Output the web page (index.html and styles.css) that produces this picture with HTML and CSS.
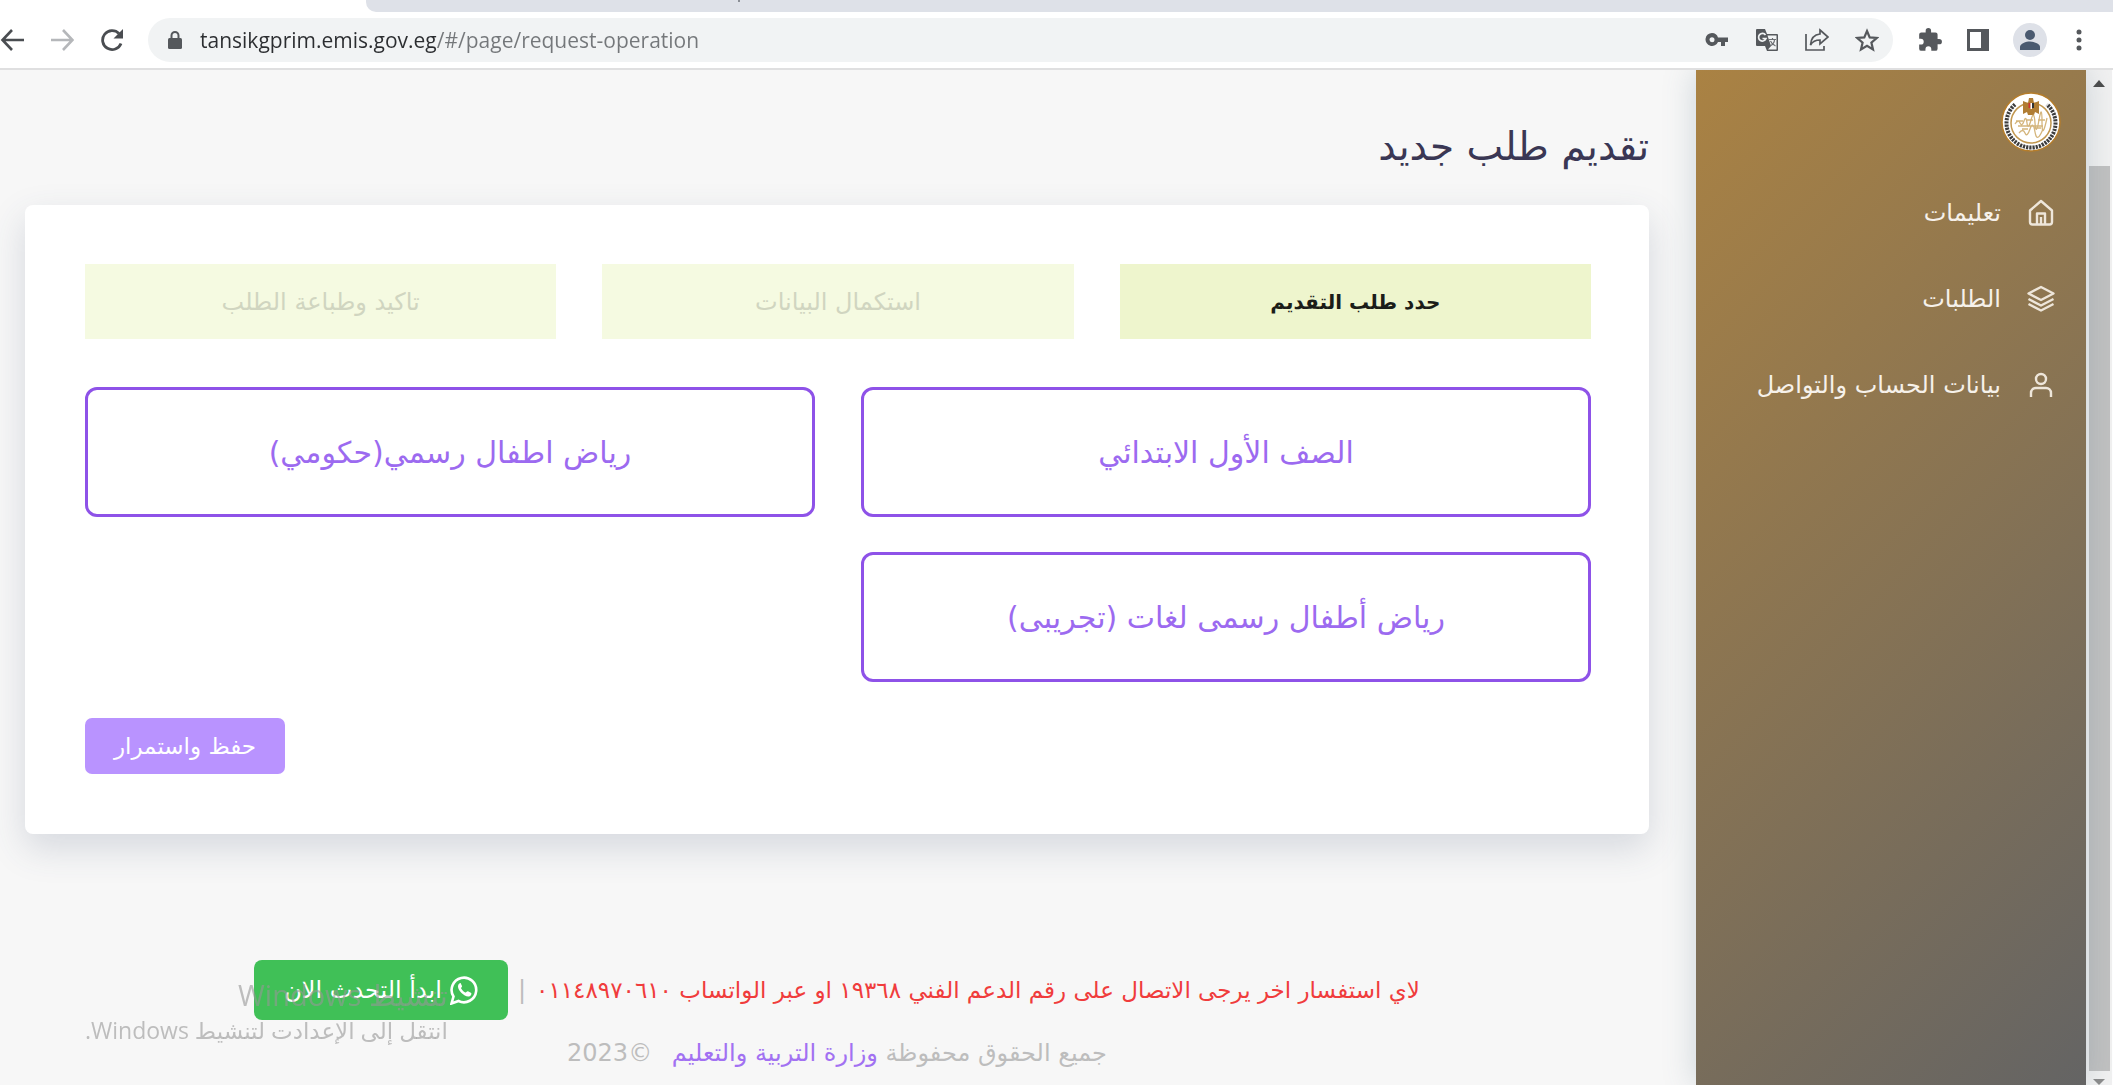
FILE: index.html
```html
<!DOCTYPE html>
<html lang="ar">
<head>
    <meta charset="UTF-8">
    <meta name="viewport" content="width=device-width, initial-scale=1.0">
    <title>تقديم طلب جديد</title>
    <link rel="stylesheet" href="styles.css">
</head>
<body>
    <!-- Browser bar -->
    <div class="tab-strip"><div class="tab-rest"><span class="tab-divider"></span></div></div>
    <header class="toolbar">
        <div class="toolbar-nav">
            <button type="button" aria-label="Back">
                <svg width="24" height="24" viewBox="0 0 24 24" fill="none" stroke="#4a4d51" stroke-width="2.6"><path d="M24 12H3M12 2 2.500 12 12 22"/></svg>
            </button>
            <button type="button" aria-label="Forward">
                <svg width="24" height="24" viewBox="0 0 24 24" fill="none" stroke="#b5b7ba" stroke-width="2.6"><path d="M1 12h21M13 2l9.500 10L13 22"/></svg>
            </button>
            <button type="button" aria-label="Reload">
                <svg width="24" height="24" viewBox="0 0 24 24" fill="none" stroke="#4a4d51" stroke-width="2.8"><path d="M21 15.500A9.500 9.500 0 1 1 19 5.500"/><path d="M23 1v9.500h-9.500z" fill="#4a4d51" stroke="none"/></svg>
            </button>
        </div>
        <div class="address">
            <svg width="14" height="20" viewBox="0 0 14 20"><path d="M3.500 9V5.500a3.500 3.500 0 0 1 7 0V9" fill="none" stroke="#55585c" stroke-width="2"/><rect x="0" y="8" width="14" height="11" rx="1.5" fill="#55585c"/></svg>
            <input type="text" class="url" dir="ltr" aria-label="Address" value="tansikgprim.emis.gov.eg/#/page/request-operation">
            <button type="button" aria-label="Passwords">
                <svg width="24" height="24" viewBox="0 0 24 24" fill="#55585c"><path fill-rule="evenodd" d="M7 5a6.500 6.500 0 1 0 6 9h3v4h4v-4h3V9.500H13A6.500 6.500 0 0 0 7 5zm0 4.200a2.500 2.500 0 1 1 0 5 2.500 2.500 0 0 1 0-5z"/></svg>
            </button>
            <button type="button" aria-label="Translate">
                <svg width="24" height="24" viewBox="0 0 24 24"><path d="M2 1h8l2 5h10a1 1 0 0 1 1 1v15a1 1 0 0 1-1 1H12l-2-5H2a1 1 0 0 1-1-1V2a1 1 0 0 1 1-1z" fill="#55585c"/><path d="M12.500 7.500H21.500v14H13l3-3.500z" fill="#f1f3f4"/><path d="M10.500 7A3.800 3.800 0 1 0 11 10.500H7.500" fill="none" stroke="#f1f3f4" stroke-width="1.7"/><path d="M14 11.500h7M17.500 10v1.500M15 18c3-1.500 4.500-4 4.500-6.500M15.500 13c1 2.500 3 4 5 5" fill="none" stroke="#6b6e72" stroke-width="1.2"/></svg>
            </button>
            <button type="button" aria-label="Share">
                <svg width="24" height="24" viewBox="0 0 24 24" fill="none" stroke="#55585c" stroke-width="1.7"><path d="M1 6v16h18v-4"/><path d="M15 2l8 7-8 7v-4c-5 0-7.500 1.500-9.500 5C6 10.500 9 6.500 15 6z"/></svg>
            </button>
            <button type="button" aria-label="Bookmark">
                <svg width="24" height="24" viewBox="0 0 24 24" fill="none" stroke="#55585c" stroke-width="2.2"><path d="M12 3l2.700 6.400 7 .6-5.300 4.600 1.600 6.800-6-3.600-6 3.600 1.600-6.800L2.300 10l7-.6z"/></svg>
            </button>
        </div>
        <div class="toolbar-actions">
            <button type="button" aria-label="Extensions">
                <svg width="26" height="26" viewBox="0 0 24 24" fill="#55585c"><path d="M20.500 11H19V7a2 2 0 0 0-2-2h-4V3.500a2.500 2.500 0 0 0-5 0V5H4a2 2 0 0 0-2 2v3.800h1.500a2.700 2.700 0 0 1 0 5.400H2V20a2 2 0 0 0 2 2h3.800v-1.500a2.700 2.700 0 0 1 5.400 0V22H17a2 2 0 0 0 2-2v-4h1.500a2.500 2.500 0 0 0 0-5z"/></svg>
            </button>
            <button type="button" aria-label="Side panel">
                <svg width="24" height="24" viewBox="0 0 24 24"><path fill-rule="evenodd" d="M1 1h22v22H1zM4 4v16h11V4z" fill="#55585c"/></svg>
            </button>
            <button type="button" class="avatar" aria-label="Profile">
                <svg width="22" height="22" viewBox="0 0 22 22" fill="#4a5a70"><circle cx="11" cy="6" r="5"/><path d="M1 21v-3c0-3.500 6-5.500 10-5.500s10 2 10 5.500v3z"/></svg>
            </button>
            <button type="button" aria-label="Menu">
                <svg width="6" height="24" viewBox="0 0 6 24" fill="#55585c"><circle cx="3" cy="4" r="2.5"/><circle cx="3" cy="12" r="2.5"/><circle cx="3" cy="20" r="2.5"/></svg>
            </button>
        </div>
    </header>

    <div class="page" dir="rtl">
        <div class="scrollbar">
            <span class="arrow-up"></span>
            <div class="thumb"></div>
            <span class="arrow-down"></span>
        </div>

        <aside class="sidebar">
            <svg class="logo" width="60" height="60" viewBox="0 0 60 60">
                <circle cx="30" cy="30" r="29" fill="#fff" stroke="#b57d2b" stroke-width="1.5"/>
                <path d="M14 12.500a24.500 24.500 0 1 0 32 0" fill="none" stroke="#3c3c3c" stroke-width="4" stroke-dasharray="2.2 1"/>
                <circle cx="30" cy="31" r="20" fill="#fff" stroke="#c1974f" stroke-width="1.5"/>
                <path d="M22 9l5 2 1-5h4l1 5 5-2v13l-4-2-1 3h-6l-1-3-4 2z" fill="#b07d34"/>
                <path d="M27.500 11h2v5h-2z" fill="#c33"/><path d="M29.500 11h1.500v6h-1.500z" fill="#fff"/><path d="M31 11h2v5h-2z" fill="#333"/>
                <path d="M14 32q3-5 5-1t4-2 3 2 4-3 4 3 4-3 3 2 5-4M15 29h7m4-1h6m5 0h7M18 41q4-5 6 0t5-4 5 3 8-3M21 37h6m6-1h7M17 34h25" fill="none" stroke="#d4b57c" stroke-width="1.3"/>
            </svg>
            <nav>
                <ul class="menu">
                    <li><a href="#"><svg class="menu-icon" viewBox="0 0 28 28"><path d="M3 11.500 14 2l11 9.500V23a2.500 2.500 0 0 1-2.500 2.500h-17A2.500 2.500 0 0 1 3 23z"/><path d="M10 25V14.500h8V25M14 18v7"/></svg>تعليمات</a></li>
                    <li><a href="#"><svg class="menu-icon" viewBox="0 0 28 28"><path d="M14 2 1.500 8.500 14 15l12.500-6.500zM1.500 14 14 20.500 26.500 14M1.500 19 14 25.500 26.500 19"/></svg>الطلبات</a></li>
                    <li><a href="#"><svg class="menu-icon" viewBox="0 0 28 28"><circle cx="14" cy="8" r="5"/><path d="M4 26v-4a5 5 0 0 1 5-5h10a5 5 0 0 1 5 5v4"/></svg>بيانات الحساب والتواصل</a></li>
                </ul>
            </nav>
        </aside>

        <main class="content">
            <h1>تقديم طلب جديد</h1>
            <section class="card">
                <ol class="steps">
                    <li class="active">حدد طلب التقديم</li>
                    <li>استكمال البيانات</li>
                    <li>تاكيد وطباعة الطلب</li>
                </ol>
                <div class="options">
                    <button type="button">الصف الأول الابتدائي</button>
                    <button type="button">رياض اطفال رسمي(حكومي)</button>
                    <button type="button">رياض أطفال رسمى لغات (تجريبى)</button>
                </div>
                <button type="button" class="save" disabled>حفظ واستمرار</button>
            </section>

            <footer class="footer">
                <div class="support">
                    <span class="support-text">لاي استفسار اخر يرجى الاتصال على رقم الدعم الفني ١٩٣٦٨ او عبر الواتساب ٠١١٤٨٩٧٠٦١٠</span>
                    <span class="divider">|</span>
                    <a href="#" class="whatsapp">
                        <svg width="28" height="30" viewBox="0 0 28 30"><path d="M1.500 28.500l2-7A12.300 12.300 0 1 1 8.500 26z" fill="none" stroke="#fff" stroke-width="2.6"/><path d="M9.500 8.500c-3 2-1 6.500 2 9.500s7.500 5 9.500 2c.6-1 .5-2-.2-2.300L18 16.200c-.6-.2-1 .1-1.600.9-.5.6-.9.5-1.600.1-1.700-.9-2.700-2-3.600-3.600-.3-.6 0-.9.4-1.400.5-.6.5-1 .3-1.500l-1.100-2.300c-.2-.4-.7-.4-1.300.1z" fill="#fff"/></svg>
                        ابدأ التحدث الان
                    </a>
                </div>
                <p class="copyright">جميع الحقوق محفوظة <a href="#">وزارة التربية والتعليم</a> <span>©2023</span></p>
            </footer>
        </main>
    </div>

    <!-- Windows activation notice, floats over the page -->
    <div class="watermark" dir="rtl">
        <strong>تنشيط Windows</strong>
        <span>انتقل إلى الإعدادت لتنشيط Windows.</span>
    </div>
</body>
</html>
```
FILE: styles.css
```css
* {
    box-sizing: border-box;
}

body {
    margin: 0;
    height: 100vh;
    display: flex;
    flex-direction: column;
    overflow: hidden;
    background-color: #f7f7f7;
    font-family: "DejaVu Sans", sans-serif;
}

button {
    font-family: inherit;
    cursor: pointer;
}

a {
    text-decoration: none;
}

/* Browser bar */
.tab-strip {
    flex: none;
    height: 12px;
    padding-left: 366px;
    background-color: #fff;
}

.tab-rest {
    height: 12px;
    padding-left: 372px;
    background-color: #dee1e8;
    border-bottom-left-radius: 10px;
}

.tab-divider {
    display: block;
    width: 2px;
    height: 2px;
    background-color: #8b8f96;
}

.toolbar {
    flex: none;
    height: 58px;
    display: flex;
    align-items: center;
    gap: 24px;
    padding-right: 31px;
    background-color: #fff;
    border-bottom: 2px solid #dfdfe0;
}

.toolbar button {
    display: flex;
    align-items: center;
    justify-content: center;
    padding: 0;
    border: none;
    background: none;
}

.toolbar-nav {
    display: flex;
    gap: 26px;
}

.address {
    flex: 1;
    height: 44px;
    display: flex;
    align-items: center;
    gap: 26px;
    padding: 0 14px 0 20px;
    border-radius: 22px;
    background-color: #f1f3f4;
}

/* host part of the address is darker than the path */
.url {
    flex: 1;
    min-width: 0;
    margin-left: -8px;
    padding: 0;
    border: none;
    outline: none;
    font-family: "Open Sans", "Noto Sans", sans-serif;
    font-size: 21px;
    color: transparent;
    background: linear-gradient(to right, #2b2d30 236px, #74777a 236px);
    -webkit-background-clip: text;
    background-clip: text;
}

.toolbar-actions {
    display: flex;
    align-items: center;
    gap: 23px;
}

.toolbar .avatar {
    width: 34px;
    height: 34px;
    border-radius: 50%;
    background-color: #dee1e8;
}

.toolbar-actions button:last-child {
    margin-left: 6px;
}

/* Page */
.page {
    flex: 1;
    min-height: 0;
    display: flex;
    overflow: hidden;
}

.scrollbar {
    flex: none;
    width: 27px;
    display: flex;
    flex-direction: column;
    align-items: center;
    background-color: #f1f1f1;
    border-right: 1px solid #fff;
}

.arrow-up,
.arrow-down {
    border: 6px solid transparent;
}

.arrow-up {
    margin-top: 4px;
    border-bottom: 7px solid #4c4c4c;
}

.arrow-down {
    margin-top: 8px;
    margin-bottom: -6px;
    border-top: 6px solid #8c8c8c;
}

.thumb {
    flex: 1;
    width: 21px;
    margin-top: 79px;
    background-color: #c1c1c1;
}

.sidebar {
    flex: none;
    width: 390px;
    padding: 22px 25px;
    background: linear-gradient(135deg, #aa8243, #646464);
    box-shadow: 0 0 30px rgba(80, 110, 130, 0.25);
}

.logo {
    display: block;
}

.menu {
    margin: 18px 0 0;
    padding: 0 6px;
    list-style: none;
}

.menu a {
    display: flex;
    align-items: center;
    gap: 26px;
    height: 86px;
    color: #f6f1ea;
    font-size: 24px;
}

.menu-icon {
    width: 28px;
    height: 28px;
    fill: none;
    stroke: #eee6da;
    stroke-width: 2.4;
    stroke-linejoin: round;
}

.content {
    flex: 1;
    min-width: 0;
    padding: 47px 47px 0 25px;
}

h1 {
    margin: 0 0 28px;
    font-size: 39px;
    line-height: 60px;
    font-weight: normal;
    color: #3a3754;
}

.card {
    display: flex;
    flex-direction: column;
    padding: 59px 58px 60px 60px;
    border-radius: 8px;
    background-color: #fff;
    box-shadow: 0 14px 36px rgba(60, 80, 110, 0.18);
}

.steps {
    display: flex;
    gap: 46px;
    margin: 0 0 48px;
    padding: 0;
    list-style: none;
}

.steps li {
    flex: 1;
    height: 75px;
    display: flex;
    align-items: center;
    justify-content: center;
    background-color: #f5fae1;
    color: #d0d5c0;
    font-size: 24px;
}

.steps .active {
    background-color: #eef5cd;
    color: #1b1d18;
    font-weight: bold;
    font-size: 20px;
}

.options {
    display: grid;
    grid-template-columns: 1fr 1fr;
    gap: 35px 46px;
    margin-bottom: 36px;
}

.options button {
    height: 130px;
    border: 3px solid #8e52e8;
    border-radius: 12px;
    background-color: #fff;
    color: #9c6af0;
    font-size: 30px;
}

.save {
    align-self: flex-end;
    width: 200px;
    height: 56px;
    padding: 0;
    border: none;
    border-radius: 7px;
    background-color: #b993ff;
    color: #fff;
    font-size: 23px;
}

/* Footer */
.footer {
    padding-top: 126px;
    color: #bdbdbd;
    font-size: 24px;
}

.support {
    display: flex;
    align-items: center;
    justify-content: center;
    gap: 10px;
    white-space: nowrap;
}

.support-text {
    color: #f03c3c;
    font-size: 23px;
}

.whatsapp {
    height: 60px;
    display: flex;
    align-items: center;
    gap: 8px;
    padding: 0 30px;
    border-radius: 8px;
    background-color: #40c057;
    color: #fff;
}

.copyright {
    margin: 16px 0 0;
    line-height: 34px;
    text-align: center;
}

.copyright a {
    color: #a271f2;
}

.copyright span {
    margin-right: 12px;
}

.watermark {
    position: fixed;
    left: 85px;
    bottom: 39px;
    display: flex;
    flex-direction: column;
    font-family: "Open Sans", "DejaVu Sans", sans-serif;
    color: rgba(150, 150, 150, 0.6);
    pointer-events: none;
}

.watermark strong {
    font-size: 29px;
    line-height: 38px;
    font-weight: normal;
}

.watermark span {
    font-size: 23px;
    line-height: 32px;
}
```
